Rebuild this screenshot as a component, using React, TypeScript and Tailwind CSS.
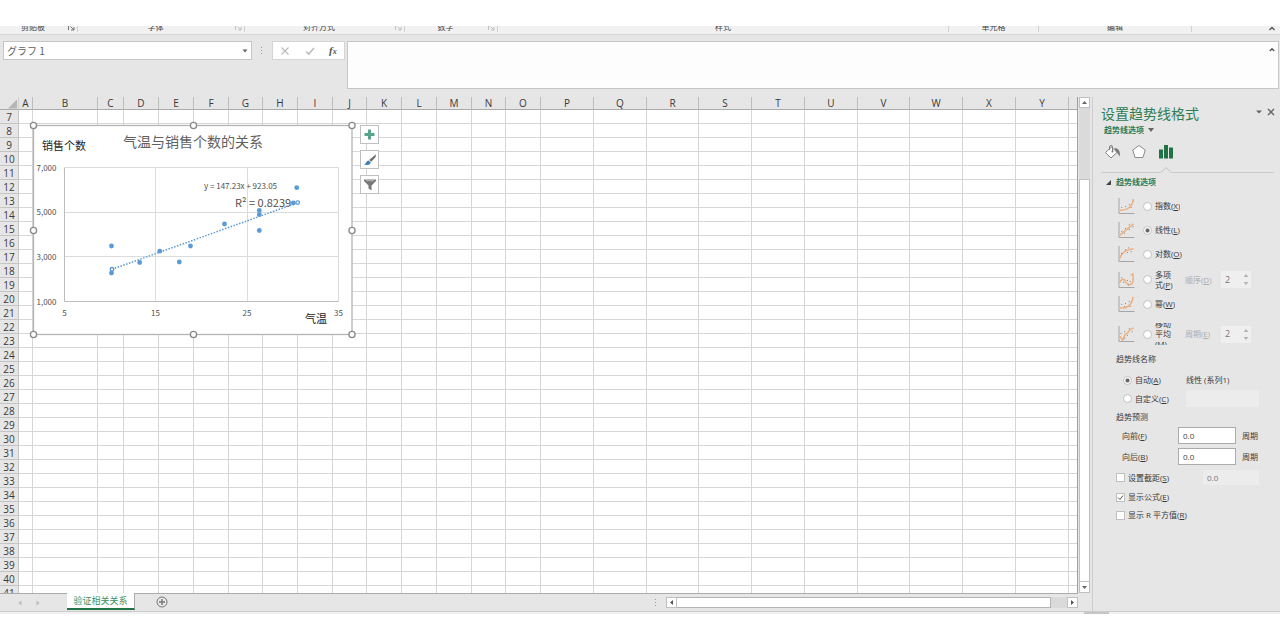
import React from "react";

const FONT = "font-['Open_Sans','Noto_Sans_CJK_SC',sans-serif]";

const COLUMNS: [string, number][] = [
  ["A", 14], ["B", 65], ["C", 26], ["D", 35], ["E", 35], ["F", 35], ["G", 34], ["H", 35], ["I", 35],
  ["J", 34], ["K", 35], ["L", 35], ["M", 35], ["N", 34], ["O", 35], ["P", 53], ["Q", 53], ["R", 52],
  ["S", 53], ["T", 53], ["U", 53], ["V", 52], ["W", 53], ["X", 53], ["Y", 53],
];
const ROWS = Array.from({ length: 35 }, (_, i) => i + 7);

function Launcher({ dim }: { dim?: boolean }) {
  return (
    <button aria-label="更多" className={"flex w-[11px] justify-end pr-[2px] " + (dim ? "text-[#c0c0c0]" : "text-[#707070]")}>
      <svg width="7" height="7" viewBox="0 0 7 7" fill="none" stroke="currentColor">
        <path d="M0.5 6V0.5H4M2.5 2.5L6 6M6 3V6H3" />
      </svg>
    </button>
  );
}

function RibbonGroup({ label, size, launcher, dim }: { label: string; size: string; launcher?: boolean; dim?: boolean }) {
  return (
    <div className={"flex h-[14px] items-center " + size}>
      <span className="flex-1 text-center text-[8px] leading-3 text-[#444]">{label}</span>
      {launcher && <Launcher dim={dim} />}
      <span className="h-[10px] w-px self-center bg-[#d0d0d0]" />
    </div>
  );
}

function Ribbon() {
  return (
    <div className="flex h-[9px] shrink-0 items-end overflow-hidden border-b border-[#d6d6d6] bg-[#f1f1f1]">
      <RibbonGroup label="剪贴板" size="w-[78px]" launcher />
      <RibbonGroup label="字体" size="w-[167px]" launcher dim />
      <RibbonGroup label="对齐方式" size="w-[160px]" launcher dim />
      <RibbonGroup label="数字" size="w-[93px]" launcher dim />
      <RibbonGroup label="样式" size="flex-1" />
      <RibbonGroup label="单元格" size="w-[90px]" />
      <RibbonGroup label="编辑" size="w-[153px]" />
      <div className="flex w-[88px] justify-end pr-1 pb-px">
        <button aria-label="折叠功能区">
          <svg width="8" height="8" viewBox="0 0 8 8" fill="none" stroke="#555" strokeWidth="1.4" className="block">
            <path d="M1.5 5L4 2.5L6.5 5" />
          </svg>
        </button>
      </div>
    </div>
  );
}

function FormulaBar() {
  return (
    <div className="flex h-[62px] shrink-0 items-start pt-[6px] pr-px pb-2 pl-[3px]">
      <div className="flex h-[19px] w-[249px] items-center border border-[#c6c6c6] bg-white">
        <input
          aria-label="名称框"
          defaultValue="グラフ 1"
          className="min-w-0 flex-1 bg-transparent pl-[3px] font-['Noto_Sans_CJK_JP',sans-serif] text-[10px] leading-4 text-[#606060] outline-none"
        />
        <button aria-label="名称列表" className="flex w-3 justify-center">
          <svg width="6" height="4" viewBox="0 0 6 4"><path d="M0.5 0.5H5.5L3 3.5Z" fill="#666" /></svg>
        </button>
      </div>
      <svg width="20" height="20" viewBox="0 0 20 20" fill="#999">
        <path d="M9 6h1v1H9zM9 9h1v1H9zM9 12h1v1H9z" />
      </svg>
      <div className="flex h-[19px] w-[73px] items-center justify-around border border-[#d4d4d4] bg-white">
        <button aria-label="取消">
          <svg width="10" height="10" viewBox="0 0 10 10" stroke="#b8b8b8" strokeWidth="1.1"><path d="M1.5 1.5L8.5 8.5M8.5 1.5L1.5 8.5" /></svg>
        </button>
        <button aria-label="输入">
          <svg width="10" height="10" viewBox="0 0 10 10" fill="none" stroke="#bdbdbd" strokeWidth="1.6"><path d="M1 5.5L3.8 8L9 2" /></svg>
        </button>
        <button aria-label="插入函数" className="font-['Liberation_Serif',serif] text-[11px] leading-4 font-bold text-[#555] italic">
          f<span className="text-[8px]">x</span>
        </button>
      </div>
      <div className="ml-[2px] flex h-12 flex-1 border border-[#c6c6c6] bg-[#fdfdfd]">
        <textarea aria-label="编辑栏" className="min-w-0 flex-1 resize-none bg-transparent px-1 text-[10px] outline-none" />
        <button aria-label="折叠编辑栏" className="flex w-3 justify-center pt-1">
          <svg width="6" height="8" viewBox="0 0 6 8" fill="none" stroke="#555" strokeWidth="1.4"><path d="M0.8 5L3 2.8L5.2 5" /></svg>
        </button>
      </div>
    </div>
  );
}

const POINTS = [
  [111.5, 246], [111.5, 273], [139.7, 262.5], [159.8, 251.2], [179.3, 262], [190.5, 246], [224.5, 224],
  [259.3, 210.5], [259.3, 214.7], [259.3, 230.5], [296.7, 187.7], [293.3, 203],
];
const HANDLES = [
  [33.5, 125.5], [193.5, 125.5], [352, 125.5], [33.5, 230.5], [352, 230.5], [33.5, 334.5], [193.5, 334.5], [352, 334.5],
];

function ScatterChart() {
  return (
    <svg
      role="img"
      aria-label="气温与销售个数的关系"
      className="absolute top-[21px] left-[26px]"
      width="334"
      height="224"
      viewBox="26 118 334 224"
    >
      <rect x="33.5" y="125.5" width="318.5" height="209" fill="#fff" stroke="#b4b4b4" strokeWidth="1.3" />
      <g stroke="#dcdcdc">
        <path d="M64.5 167.5H338.5M64.5 212.5H338.5M64.5 256.5H338.5M155.5 167.5V301.5M247.5 167.5V301.5M338.5 167.5V301.5" fill="none" />
        <path d="M64.5 167.5V301.5H338.5" fill="none" stroke="#bdbdbd" />
      </g>
      <g fontFamily="'Noto Sans CJK SC', sans-serif">
        <text x="193" y="147" fontSize="14" fill="#606060" textAnchor="middle">气温与销售个数的关系</text>
        <text x="42" y="150" fontSize="11" fill="#222">销售个数</text>
        <text x="305" y="323" fontSize="11" fill="#222">气温</text>
        <text x="204" y="189" fontSize="8" fill="#505050">y = 147.23x + 923.05</text>
        <text x="235" y="207" fontSize="11" fill="#505050">R² = 0.8239</text>
      </g>
      <g fontFamily="'Noto Sans CJK SC', sans-serif" fontSize="8" fill="#505050">
        <text x="56.5" y="170.5" textAnchor="end">7,000</text>
        <text x="56.5" y="215" textAnchor="end">5,000</text>
        <text x="56.5" y="260" textAnchor="end">3,000</text>
        <text x="56.5" y="304.5" textAnchor="end">1,000</text>
        <text x="64.5" y="316" textAnchor="middle">5</text>
        <text x="155.5" y="316" textAnchor="middle">15</text>
        <text x="247" y="316" textAnchor="middle">25</text>
        <text x="338.5" y="316" textAnchor="middle">35</text>
      </g>
      <path d="M112 269.3L297.7 202.7" stroke="#5b9bd5" strokeWidth="1.5" strokeDasharray="1.5 1.5" />
      {POINTS.map(([x, y]) => (
        <circle key={x + "-" + y} cx={x} cy={y} r="2.4" fill="#5b9bd5" />
      ))}
      <circle cx="112" cy="269.3" r="1.8" fill="#fff" stroke="#5b9bd5" strokeWidth="1.3" />
      <circle cx="297.7" cy="202.6" r="1.8" fill="#fff" stroke="#5b9bd5" strokeWidth="1.3" />
      {HANDLES.map(([x, y]) => (
        <circle key={x + "-" + y} cx={x} cy={y} r="3.1" fill="#fff" stroke="#8a8a8a" strokeWidth="1.3" />
      ))}
    </svg>
  );
}

const TOOL = "flex size-[19px] items-center justify-center border border-[#c0c0c0] bg-white";

function ChartTools() {
  return (
    <div className="absolute top-7 left-[360px] flex flex-col gap-[6px]">
      <button aria-label="图表元素" className={TOOL}>
        <svg width="11" height="11" viewBox="0 0 11 11"><path d="M4 0.5h3v3.5h3.5v3H7v3.5H4V7H0.5V4H4z" fill="#5aa58a" /></svg>
      </button>
      <button aria-label="图表样式" className={TOOL}>
        <svg width="14" height="14" viewBox="0 0 14 14">
          <path d="M13 1.2L12.6 4L8.2 8.8L6.2 7Z" fill="#6f6a66" />
          <path d="M5.6 7.4L7.8 9.4C7.4 11.6 4 12.6 1 11.6C3 10.8 3 8 5.6 7.4Z" fill="#3f7fb8" />
        </svg>
      </button>
      <button aria-label="图表筛选器" className={TOOL}>
        <svg width="12" height="12" viewBox="0 0 12 12">
          <path d="M0 0.5H12V2L7.5 6.5V11.5L4.5 9.5V6.5L0 2Z" fill="#777" />
          <path d="M2 1.7H10" stroke="#bbb" />
        </svg>
      </button>
    </div>
  );
}

function Sheet() {
  return (
    <div className="relative min-w-0 flex-1 overflow-hidden border-r border-[#9f9f9f] bg-white">
      <table className="w-full table-fixed border-separate border-spacing-0 text-[10px] leading-3 text-[#3a3a3a]">
        <colgroup>
          <col className="w-[19px]" />
          {COLUMNS.map(([name, width]) => (
            <col key={name} style={{ width }} />
          ))}
          <col />
        </colgroup>
        <thead>
          <tr className="h-[13px] bg-[#e6e6e6]">
            <th aria-label="全选" className="h-[13px] border-r border-b border-[#ababab] border-r-[#cfcfcf] p-0">
              <svg width="18" height="11" viewBox="0 0 18 11" className="block"><path d="M17 1.5V10.5H8Z" fill="#b5b5b5" /></svg>
            </th>
            {COLUMNS.map(([name]) => (
              <th key={name} scope="col" className="h-[13px] border-r border-b border-[#ababab] border-r-[#bdbdbd] p-0 font-normal">
                {name}
              </th>
            ))}
            <th className="h-[13px] border-b border-[#ababab] p-0" />
          </tr>
        </thead>
        <tbody>
          {ROWS.map((row) => (
            <tr key={row} className="h-[14px]">
              <th scope="row" className="h-[14px] border-r border-b border-[#c4c4c4] bg-[#e6e6e6] p-0 pt-px font-normal">{row}</th>
              {COLUMNS.map(([name]) => (
                <td key={name} className="h-[14px] border-r border-b border-[#d6d6d6] p-0" />
              ))}
              <td className="h-[14px] border-b border-[#d6d6d6] p-0" />
            </tr>
          ))}
        </tbody>
      </table>
      <ScatterChart />
      <ChartTools />
    </div>
  );
}

function VerticalScroll() {
  return (
    <div className="flex w-[14px] shrink-0 flex-col pr-[2px] pl-px">
      <button aria-label="向上滚动" className="flex h-[11px] items-center justify-center border border-[#c0c0c0] bg-white">
        <svg width="5" height="3" viewBox="0 0 5 3"><path d="M0 3L2.5 0L5 3Z" fill="#666" /></svg>
      </button>
      <div className="h-[71px] bg-[#dadada]" />
      <div className="flex-1 border border-[#c0c0c0] bg-white" />
      <button aria-label="向下滚动" className="flex h-[11px] items-center justify-center border border-t-0 border-[#c0c0c0] bg-white">
        <svg width="5" height="3" viewBox="0 0 5 3"><path d="M0 0L2.5 3L5 0Z" fill="#666" /></svg>
      </button>
    </div>
  );
}

function SheetTabs() {
  return (
    <div className="flex h-[18px] shrink-0 pr-[14px]">
      <div className="flex min-w-0 flex-1 items-start border-t border-[#ababab]">
        <div className="flex h-[17px] w-[67px] items-center gap-[14px] pl-[18px]">
          <button aria-label="上一个工作表"><svg width="4" height="6" viewBox="0 0 4 6" className="block"><path d="M3.5 0.5V5.5L0.5 3Z" fill="#bbb" /></svg></button>
          <button aria-label="下一个工作表"><svg width="4" height="6" viewBox="0 0 4 6" className="block"><path d="M0.5 0.5V5.5L3.5 3Z" fill="#bbb" /></svg></button>
        </div>
        <button className="-mt-px h-[17px] w-[68px] border-r border-b-2 border-[#217346] border-r-[#ababab] bg-white text-[9px] leading-[14px] whitespace-nowrap text-[#217346]">
          <span className="text-[#3b8f5f]">验证相关关系</span>
        </button>
        <button aria-label="新工作表" className="mt-[2px] ml-[21px]">
          <svg width="12" height="12" viewBox="0 0 12 12" fill="none" stroke="#777"><circle cx="6" cy="6" r="5" /><path d="M6 3V9M3 6H9" strokeWidth="1.4" /></svg>
        </button>
        <div className="mt-[3px] ml-auto flex h-[11px] w-[424px]">
          <svg width="12" height="11" viewBox="0 0 12 11" fill="#999"><path d="M1 2h1v1H1zM1 5h1v1H1zM1 8h1v1H1z" /></svg>
          <button aria-label="向左滚动" className="flex w-[11px] items-center justify-center border border-[#c0c0c0] bg-white">
            <svg width="3" height="5" viewBox="0 0 3 5"><path d="M3 0V5L0 2.5Z" fill="#555" /></svg>
          </button>
          <div className="flex-1 border border-l-0 border-[#b4b4b4] bg-white" />
          <div className="w-[16px] bg-[#dadada]" />
          <button aria-label="向右滚动" className="flex w-[11px] items-center justify-center border border-[#c0c0c0] bg-white">
            <svg width="3" height="5" viewBox="0 0 3 5"><path d="M0 0V5L3 2.5Z" fill="#555" /></svg>
          </button>
        </div>
      </div>
    </div>
  );
}

const CURVES: Record<string, { d: string; dots: string }> = {
  exp: { d: "M1.5 13C9 13.5 14 10 16 2", dots: "M3 10h1M7 9h1M11 7h1M13 10h1M15 2h1" },
  lin: { d: "M1.5 14L16 2", dots: "M3 10h1M7 7h1M6 12h1M11 8h1M11 3h1M15 5h1" },
  log: { d: "M1.5 13C3 7 7 4 16 3", dots: "M3 8h1M7 4h1M9 7h1M13 6h1M10 2h1" },
  poly: { d: "M1.5 11C3 7 6 7 7.5 10C9 14 15 15 15.5 9C15.5 6 16 5 15 1", dots: "M3 6h1M5 11h1M9 9h1M12 10h1M13 3h1M10 14h1" },
  pow: { d: "M1.5 12.5C8 13.5 14 11 15.5 1", dots: "M3 9h1M6 11h1M7 8h1M12 11h1M11 6h1" },
  avg: { d: "M1.5 11L4.5 15L7 9L10 7L12 4L16 2", dots: "M2 8h1M6 13h1M6 6h1M9 10h1M11 3h1M14 6h1" },
};

function CurveIcon({ kind }: { kind: string }) {
  return (
    <svg width="17" height="16" viewBox="0 0 17 17" fill="none" className="shrink-0">
      <path d="M0.5 0V16.5H17" stroke="#a0a0a0" />
      <path d={CURVES[kind].d} stroke="#edb184" strokeWidth="1.7" />
      <path d={CURVES[kind].dots} stroke="#85796f" />
    </svg>
  );
}

const RADIO =
  "m-0 size-[9px] shrink-0 appearance-none rounded-full border border-[#c0c0c0] bg-white checked:bg-[radial-gradient(circle,#666_0px,#666_1.5px,#fff_2.5px)]";
const INPUT = "h-[17px] border border-[#ababab] bg-white px-1 text-[8px] leading-3 text-[#444] outline-none";
const SOFT = "border-none bg-[#ececec] px-1 text-[8px] leading-3 text-[#777] outline-none";

function Key({ k }: { k: string }) {
  return <>(<u>{k}</u>)</>;
}

function TrendRow({ kind, text, k, height, checked, children }: {
  kind: string; text: string; k: string; height: string; checked?: boolean; children?: React.ReactNode;
}) {
  return (
    <div className={"flex items-center pl-[25px] " + height}>
      <CurveIcon kind={kind} />
      <label className="ml-2 flex h-[22px] items-center gap-[3px] overflow-hidden">
        <input type="radio" name="trend" defaultChecked={checked} className={RADIO} />
        <span className={children ? "w-5 leading-[10px]" : "whitespace-nowrap"}>
          {text}<Key k={k} />
        </span>
      </label>
      {children}
    </div>
  );
}

function Spinner({ id, label, k }: { id: string; label: string; k: string }) {
  return (
    <div className="ml-[10px] flex items-center">
      <label htmlFor={id} className="w-[36px] whitespace-nowrap text-[#adadad]">{label}<Key k={k} /></label>
      <div className="flex h-[17px] w-[30px] items-center bg-[#efefef]">
        <input id={id} defaultValue="2" disabled className="w-[22px] bg-transparent pl-1 text-[9px] text-[#777]" />
        <svg width="6" height="13" viewBox="0 0 6 13" fill="#b5b5b5"><path d="M0.5 4L3 1L5.5 4ZM0.5 9L3 12L5.5 9Z" /></svg>
      </div>
    </div>
  );
}

function Check({ text, k, checked }: { text: string; k: string; checked?: boolean }) {
  return (
    <label className="flex items-center gap-[3px] whitespace-nowrap">
      <span className="relative flex">
        <input type="checkbox" defaultChecked={checked} className="peer m-0 size-[9px] appearance-none border border-[#c0c0c0] bg-white" />
        <svg viewBox="0 0 9 9" className="pointer-events-none absolute inset-0 hidden size-[9px] peer-checked:block" fill="none" stroke="#555">
          <path d="M2 4.5L4 6.5L7 2.5" />
        </svg>
      </span>
      <span>{text}<Key k={k} /></span>
    </label>
  );
}

function ForecastRow({ id, text, k }: { id: string; text: string; k: string }) {
  return (
    <div className="flex h-[21px] items-center pl-[29px]">
      <label htmlFor={id} className="w-14">{text}<Key k={k} /></label>
      <input id={id} defaultValue="0.0" className={INPUT + " w-[58px]"} />
      <span className="ml-[6px]">周期</span>
    </div>
  );
}

function FormatPane() {
  return (
    <aside className="w-[188px] shrink-0 border-l border-[#cdcdcd] pt-[7px] text-[8px] leading-3 text-[#3a3a3a]">
      <div className="flex h-[19px] items-center pr-[5px] pl-2">
        <h2 className="flex-1 text-[14px] leading-[18px] text-[#2f7d54]">设置趋势线格式</h2>
        <button aria-label="任务窗格选项" className="mr-[5px] mb-1">
          <svg width="6" height="4" viewBox="0 0 6 4" className="block"><path d="M0 0.5H6L3 3.5Z" fill="#666" /></svg>
        </button>
        <button aria-label="关闭" className="mb-1">
          <svg width="8" height="8" viewBox="0 0 8 8" className="block" stroke="#666" strokeWidth="1.4"><path d="M1 1L7 7M7 1L1 7" /></svg>
        </button>
      </div>
      <button className="flex h-[14px] items-center gap-1 pl-[11px] font-bold text-[#2f7d54]">
        趋势线选项
        <svg width="6" height="4" viewBox="0 0 6 4"><path d="M0 0H6L3 4Z" fill="#666" /></svg>
      </button>
      <div className="flex h-[30px] items-center gap-[10px] pl-[11px]">
        <button aria-label="填充与线条">
          <svg width="17" height="16" viewBox="0 0 17 16" fill="none" className="block">
            <path d="M7.5 3L13 8.5L7 14L1.5 8.5Z" fill="#fff" stroke="#808080" />
            <path d="M5.5 6V3Q5.5 1.5 7 1.5Q8.5 1.5 8.5 3V7" stroke="#808080" />
            <circle cx="8.5" cy="7.5" r="1" fill="#777" />
            <path d="M10 4C14.5 4 16.5 7 15.7 12.5L13 8.5Z" fill="#777" />
          </svg>
        </button>
        <button aria-label="效果">
          <svg width="16" height="16" viewBox="0 0 16 16" className="block"><path d="M8 1.5L14.2 6L12 13.5H4L1.8 6Z" fill="#fff" stroke="#8c8c8c" /></svg>
        </button>
        <button aria-label="趋势线选项" className="ml-px">
          <svg width="16" height="16" viewBox="0 0 16 16" className="block"><path d="M1 5.5h4v9H1zM6 1h4v13.5H6zM11 3.5h4v11h-4z" fill="#217346" /></svg>
        </button>
      </div>
      <div className="flex h-[6px] items-end pr-[6px] pl-2">
        <span className="w-[60px] border-b border-[#cacaca]" />
        <svg width="10" height="6" viewBox="0 0 10 6" fill="none" stroke="#c0c0c0"><path d="M0 5.5L5 0.5L10 5.5" /></svg>
        <span className="flex-1 border-b border-[#cacaca]" />
      </div>
      <button className="flex h-[18px] items-center gap-[5px] pl-[13px] font-bold text-[#2f7d54]">
        <svg width="5" height="5" viewBox="0 0 5 5"><path d="M5 0V5H0Z" fill="#444" /></svg>
        趋势线选项
      </button>
      <div className="pt-[3px]">
        <TrendRow kind="exp" text="指数" k="X" height="h-6" />
        <TrendRow kind="lin" text="线性" k="L" height="h-6" checked />
        <TrendRow kind="log" text="对数" k="O" height="h-6" />
        <TrendRow kind="poly" text="多项式" k="P" height="h-[27px]"><Spinner id="order" label="顺序" k="D" /></TrendRow>
        <TrendRow kind="pow" text="幂" k="W" height="h-[22px]" />
        <TrendRow kind="avg" text="移动平均" k="M" height="h-[38px]"><Spinner id="period" label="周期" k="E" /></TrendRow>
      </div>
      <h3 className="mb-[5px] h-[13px] pl-[23px]">趋势线名称</h3>
      <div className="flex h-[18px] items-center pl-[30px]">
        <label className="flex w-[63px] items-center gap-[3px]">
          <input type="radio" name="label" defaultChecked className={RADIO} />
          <span>自动<Key k="A" /></span>
        </label>
        <span>线性 (系列1)</span>
      </div>
      <div className="flex h-[19px] items-center pl-[30px]">
        <label className="flex w-[63px] items-center gap-[3px]">
          <input type="radio" name="label" className={RADIO} />
          <span className="whitespace-nowrap">自定义<Key k="C" /></span>
        </label>
        <input aria-label="自定义名称" disabled className={SOFT + " h-[17px] w-[73px]"} />
      </div>
      <h3 className="h-[17px] pl-[23px] leading-[17px]">趋势预测</h3>
      <ForecastRow id="forward" text="向前" k="F" />
      <ForecastRow id="backward" text="向后" k="B" />
      <div className="flex h-[21px] items-center justify-between pr-[21px] pl-[23px]">
        <Check text="设置截距" k="S" />
        <input aria-label="截距" defaultValue="0.0" disabled className={SOFT + " h-[15px] w-[56px]"} />
      </div>
      <div className="flex h-[18px] items-center pl-[23px]"><Check text="显示公式" k="E" checked /></div>
      <div className="flex h-[18px] items-center pl-[23px]"><Check text="显示 R 平方值" k="R" /></div>
    </aside>
  );
}

export default function App() {
  return (
    <div lang="zh-CN" className={"flex h-screen flex-col overflow-hidden bg-white pt-[26px] pb-[25px] " + FONT}>
      <Ribbon />
      <div className="flex min-h-0 flex-1 flex-col border-b border-[#cbcbcb] bg-[#e6e6e6]">
        <FormulaBar />
        <div className="flex min-h-0 flex-1">
          <main className="flex min-w-0 flex-1 flex-col">
            <div className="flex min-h-0 flex-1">
              <Sheet />
              <VerticalScroll />
            </div>
            <SheetTabs />
          </main>
          <FormatPane />
        </div>
      </div>
      <div className="flex h-[2px] shrink-0 justify-end bg-[#f1f1f1] pr-[171px]">
        <span className="w-[25px] bg-[#c6c6c6]" />
      </div>
    </div>
  );
}
